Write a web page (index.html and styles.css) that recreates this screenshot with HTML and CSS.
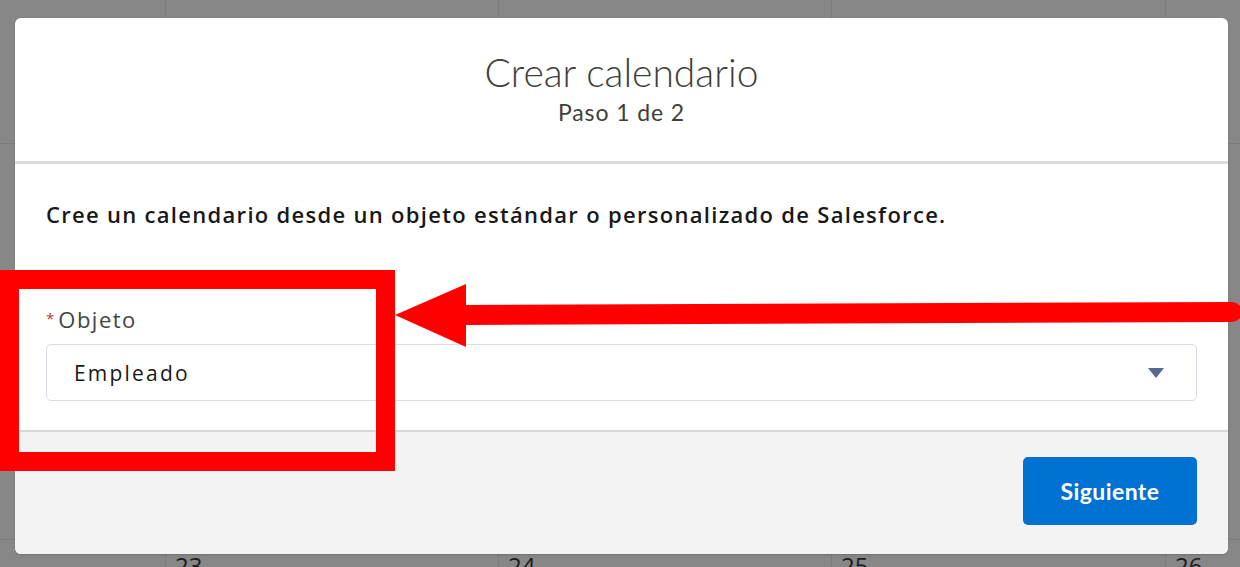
FILE: index.html
```html
<!DOCTYPE html>
<html lang="es">
<head>
<meta charset="utf-8">
<title>Crear calendario</title>
<link rel="stylesheet" href="styles.css">
</head>
<body>
<div class="calendar">
  <div class="cell"></div><div class="cell"></div><div class="cell"></div><div class="cell"></div><div class="cell last"></div>
  <div class="cell"></div><div class="cell"></div><div class="cell"></div><div class="cell"></div><div class="cell last"></div>
  <div class="cell"></div><div class="cell"><span class="date">23</span></div><div class="cell"><span class="date">24</span></div><div class="cell"><span class="date">25</span></div><div class="cell last"><span class="date">26</span></div>
</div>

<div class="modal">
  <header class="modal-header">
    <h1 class="title">Crear calendario</h1>
    <p class="subtitle">Paso 1 de 2</p>
  </header>
  <section class="modal-body">
    <p class="intro">Cree un calendario desde un objeto estándar o personalizado de Salesforce.</p>
    <div class="field">
      <label class="label"><abbr class="req">*</abbr>Objeto</label>
      <div class="select">
        <span class="value">Empleado</span>
        <svg class="caret" width="16" height="10" viewBox="0 0 16 10"><path d="M0 0 H16 L8 10 Z" fill="#54698d"/></svg>
      </div>
    </div>
  </section>
  <footer class="modal-footer">
    <button class="btn">Siguiente</button>
  </footer>
</div>

<svg class="annotation" width="1240" height="567" viewBox="0 0 1240 567">
  <path d="M0 270 H395 V471 H0 Z M19 289 V452 H376 V289 Z" fill="#ff0000" fill-rule="evenodd"/>
  <polygon points="395,315 466,284 466,305 1232,302 1232,322 466,325 466,347" fill="#ff0000"/>
  <circle cx="1232" cy="312" r="10" fill="#ff0000"/>
</svg>
</body>
</html>
```
FILE: styles.css
```css
* { box-sizing: border-box; }
html, body {
  margin: 0;
  padding: 0;
  width: 1240px;
  height: 567px;
  overflow: hidden;
}
body {
  position: relative;
  background: #878787;
  font-family: "Lato", "Noto Sans", sans-serif;
}
.calendar {
  display: grid;
  grid-template-columns: 166px 333px 333px 334px 1fr;
  grid-template-rows: 144px 396px 1fr;
  height: 567px;
}
.cell {
  border-right: 1px solid #7b7b7b;
  border-bottom: 1px solid #7b7b7b;
  padding: 12px 9px 0;
}
.cell.last { border-right: none; }
.date {
  display: block;
  font-family: "Open Sans", sans-serif;
  font-size: 24px;
  line-height: 28px;
  color: #1c1c1c;
}
.modal {
  position: absolute;
  left: 15px;
  top: 18px;
  width: 1213px;
  height: 536px;
  background: #fff;
  border-radius: 6px;
  overflow: hidden;
  display: flex;
  flex-direction: column;
  box-shadow: 0 1px 2px rgba(0,0,0,0.15);
}
.modal-header {
  height: 146px;
  border-bottom: 3px solid #dcdcdc;
  text-align: center;
  padding-top: 30px;
}
.title {
  margin: 0;
  font-family: "Lato", sans-serif;
  font-weight: 300;
  font-size: 39px;
  line-height: 48px;
  color: #3e3e3c;
}
.subtitle {
  margin: 3px 0 0;
  font-family: "Lato", sans-serif;
  font-weight: 400;
  font-size: 23px;
  line-height: 26px;
  letter-spacing: 0.9px;
  color: #3e3e3c;
}
.modal-body {
  height: 268px;
  border-bottom: 2px solid #d8d8d8;
  padding: 36px 31px 0 31px;
}
.intro {
  margin: 0;
  font-family: "Open Sans", sans-serif;
  font-weight: 600;
  font-size: 22px;
  line-height: 28px;
  letter-spacing: 1.3px;
  color: #181818;
}
.field { margin-top: 77px; }
.label {
  display: block;
  font-family: "Open Sans", sans-serif;
  font-size: 22px;
  line-height: 26px;
  letter-spacing: 1.5px;
  color: #444442;
  margin-bottom: 12px;
}
.req {
  color: #c23934;
  text-decoration: none;
  font-size: 15px;
  margin-right: 4px;
  letter-spacing: 0;
  vertical-align: 4px;
}
.select {
  height: 57px;
  border: 1px solid #d8dde6;
  border-radius: 5px;
  display: flex;
  align-items: center;
  justify-content: space-between;
  padding: 0 32px 0 27px;
}
.value {
  font-family: "Open Sans", sans-serif;
  font-size: 21px;
  letter-spacing: 2.2px;
  color: #181818;
}
.caret { display: block; }
.modal-footer {
  flex: 1;
  background: #f3f3f3;
  display: flex;
  justify-content: flex-end;
  align-items: flex-start;
  padding: 25px 31px 0 0;
}
.btn {
  width: 174px;
  height: 68px;
  background: #0070d2;
  border: none;
  border-radius: 5px;
  color: #fff;
  font-family: "Lato", sans-serif;
  font-weight: 700;
  font-size: 23px;
  letter-spacing: 0.4px;
}
.annotation {
  position: absolute;
  left: 0;
  top: 0;
  pointer-events: none;
}
```
